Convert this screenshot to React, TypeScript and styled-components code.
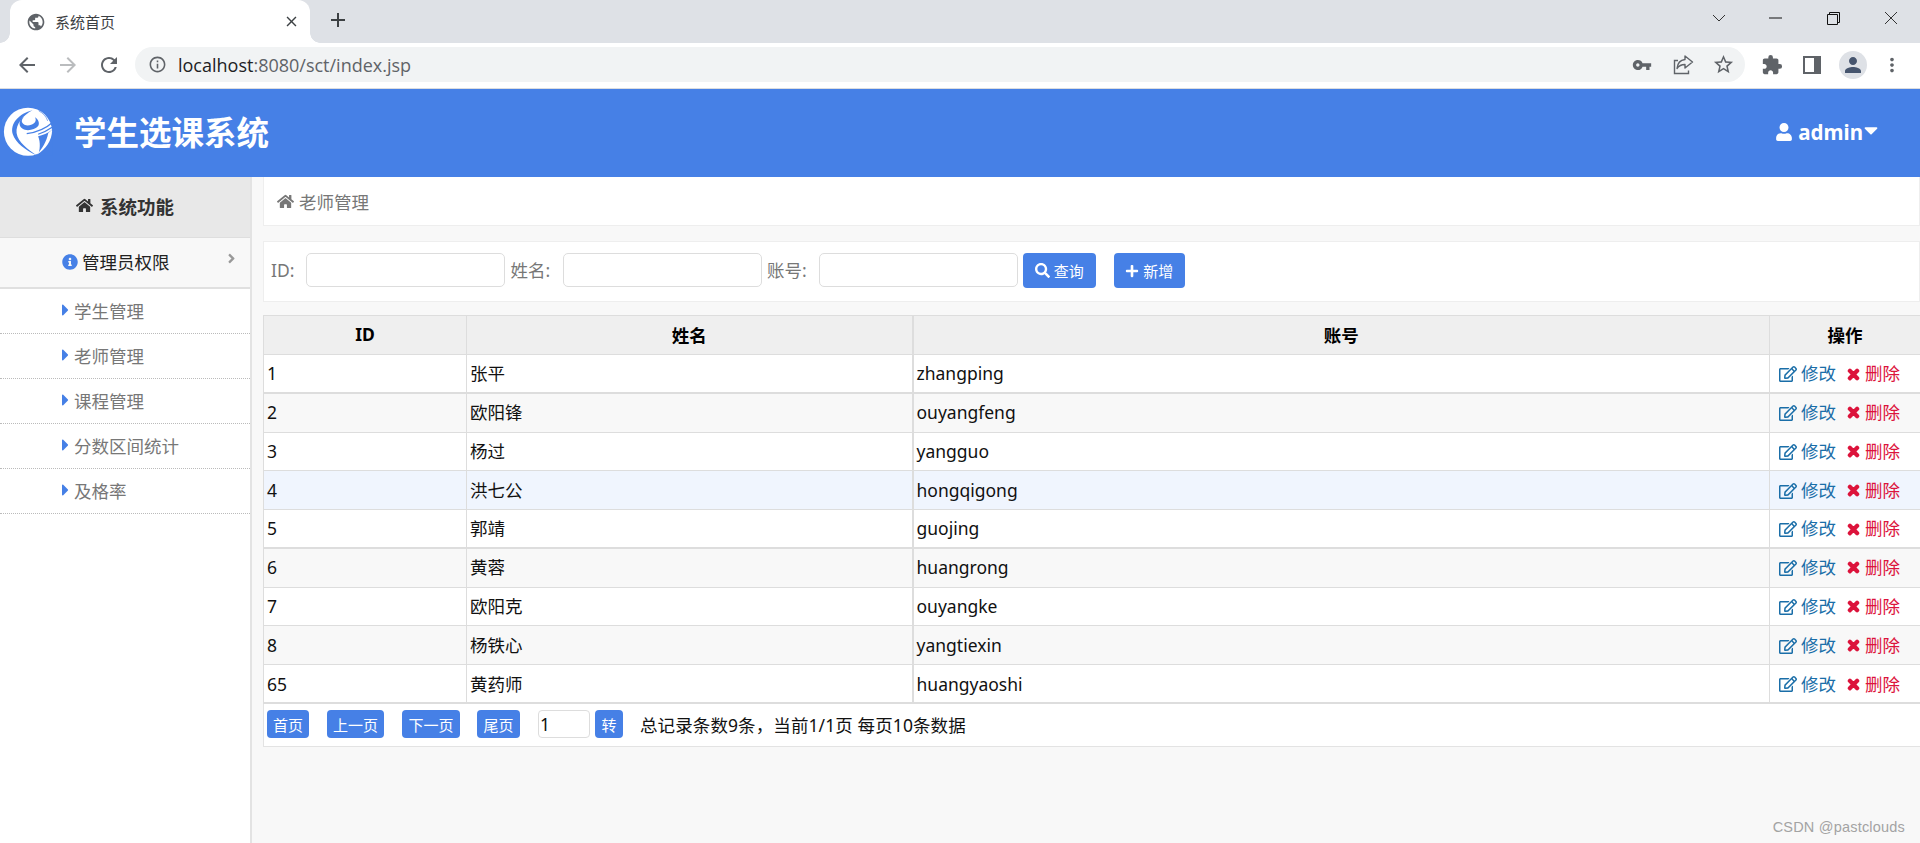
import React from "react";
import styled, { createGlobalStyle } from "styled-components";
import { FaHome, FaInfoCircle, FaCaretRight, FaCaretDown, FaUser, FaRegEdit, FaTimes, FaSearch, FaPlus, FaAngleRight } from "react-icons/fa";
import { MdPublic, MdVpnKey, MdExtension, MdMoreVert, MdPerson, MdArrowBack, MdArrowForward, MdRefresh, MdInfoOutline, MdStarBorder, MdClose, MdAdd } from "react-icons/md";

const FONT = `"Noto Sans", "Noto Sans CJK SC", sans-serif`;
const BLUE = "#4680e6";

const Global = createGlobalStyle`
  html, body { margin: 0; padding: 0; height: 100%; overflow: hidden; background: #f8f8f8; }
  * { box-sizing: border-box; }
  body { font-family: ${FONT}; font-size: 17.5px; }
`;

const Page = styled.div`
  width: 1920px; height: 843px; display: flex; flex-direction: column; position: relative; overflow: hidden;
`;
const TabStrip = styled.div`
  height: 43px; background: #dee1e6; display: flex; align-items: flex-end; padding-left: 10px; flex: none;
`;
const Tab = styled.div`
  width: 300px; height: 43px; background: #fff; border-radius: 12px 12px 0 0; display: flex; align-items: center;
  padding: 0 10px 0 16px; position: relative; color: #3c4043; font-size: 15px;
  span { margin-left: 9px; flex: 1; }
  &::before, &::after { content: ""; position: absolute; bottom: 0; width: 10px; height: 10px;
    background: radial-gradient(circle at 0 0, #dee1e6 9.5px, #fff 10px); }
  &::before { left: -10px; }
  &::after { right: -10px; transform: scaleX(-1); }
`;
const NewTab = styled.div`
  margin: 0 0 3px 16px; height: 40px; display: flex; align-items: center; color: #3c4043;
`;
const WindowControls = styled.div`
  margin-left: auto; height: 43px; display: flex; align-items: flex-start;
`;
const WinBtn = styled.div<{ $w: number }>`
  width: ${(p) => p.$w}px; height: 36px; display: flex; align-items: center; justify-content: center;
`;
const Toolbar = styled.div`
  height: 46px; flex: none; background: #fff; border-bottom: 1px solid #dadce0; display: flex; align-items: center; padding: 0 0 2px 15px;
`;
const NavBtn = styled.div<{ $dim?: boolean }>`
  width: 24px; height: 24px; margin-right: 17px; display: flex; color: ${(p) => (p.$dim ? "#babcbe" : "#5f6368")};
`;
const Omnibox = styled.div`
  width: 1610px; height: 35px; margin-left: -3px; border-radius: 18px; background: #f1f3f4; display: flex; align-items: center; padding: 0 0 0 13px; color: #5f6368;
`;
const Url = styled.div`
  margin-left: 11px; font-family: "Open Sans", sans-serif; font-size: 18px; color: #5f6368; flex: 1;
  b { font-weight: 400; color: #202124; }
`;
const OmniIcon = styled.div<{ $mr: number }>`
  display: flex; margin-right: ${(p) => p.$mr}px; color: #5f6368;
`;
const ToolIcons = styled.div`
  display: flex; align-items: center; color: #5f6368; margin-left: 14px;
`;
const ToolIcon = styled.div<{ $w: number }>`
  width: ${(p) => p.$w}px; display: flex; justify-content: center; align-items: center;
`;
const Avatar = styled.div`
  width: 28px; height: 28px; border-radius: 50%; background: #dee1e6; display: flex; align-items: center; justify-content: center; color: #46556e;
`;
const Header = styled.header`
  height: 88px; flex: none; background: ${BLUE}; display: flex; align-items: center; color: #fff;
`;
const Title = styled.h1`
  margin: 0 0 0 20px; font-size: 32.5px; font-weight: 700; line-height: 1;
`;
const UserMenu = styled.div`
  margin-left: auto; margin-right: 42px; margin-top: -2px; display: flex; align-items: center; font-size: 20.5px; font-weight: 700;
  svg:first-child { margin-right: 5px; }
  svg:last-child { width: 14px; height: 22px; margin: -4px 0 0 1px; }
`;
const Body = styled.div`
  flex: 1; display: flex; min-height: 0;
`;
const Side = styled.aside`
  width: 252px; flex: none; background: #fff; border-right: 2px solid #e3e3e3;
`;
const SideHead = styled.div`
  height: 61px; background: #e8e8e8; border-bottom: 1px solid #dedede; display: flex; align-items: center; justify-content: center; gap: 7px;
  font-size: 18.5px; font-weight: 700; color: #333; padding-bottom: 3px;
`;
const SideGroup = styled.div`
  height: 51px; background: #f8f8f8; border-bottom: 2px solid #e0e0e0; display: flex; align-items: center; padding: 0 11px 2px 62px; color: #222;
  svg:first-child { color: ${BLUE}; margin-right: 4px; }
  svg:last-child { margin-left: auto; margin-top: -6px; color: #999; }
`;
const SideItem = styled.div`
  height: 45px; border-bottom: 1px dotted #bbb; display: flex; align-items: center; padding: 0 0 2px 62px; color: #777;
  svg { color: ${BLUE}; width: 7px; height: 20px; margin-right: 5px; }
`;
const Main = styled.main`
  flex: 1; padding-left: 11px; min-width: 0; background: #f8f8f8;
`;
const Crumb = styled.div`
  height: 49px; background: #fff; border: 1px solid #eee; border-top: 0; display: flex; align-items: center; padding: 0 0 0 13px; color: #777; gap: 5px;
`;
const SearchBar = styled.div`
  height: 61px; margin-top: 15px; background: #fff; border: 1px solid #eee; display: flex; align-items: center; padding: 0 0 4px 7px; color: #777;
`;
const FieldLabel = styled.label<{ $mr: number }>`
  white-space: nowrap; margin-right: ${(p) => p.$mr}px;
`;
const TextInput = styled.input`
  width: 199px; height: 34px; border: 1px solid #ddd; border-radius: 5px; background: #fff; margin-right: 5px; padding: 0;
`;
const ActionButton = styled.button<{ $ml: number; $w: number }>`
  width: ${(p) => p.$w}px; height: 35px; margin-left: ${(p) => p.$ml}px; border: 0; border-radius: 4px; background: ${BLUE}; color: #fff; padding: 0;
  display: flex; align-items: center; justify-content: center; gap: 4px; font: 15px ${FONT}; margin-top: 2px;
`;
const Grid = styled.table`
  margin-top: 13px; border-collapse: collapse; table-layout: fixed; width: 1657px; background: #fff; color: #111;
  th:nth-child(3), td:nth-child(3) { border-left-width: 2px; }
`;
const Th = styled.th<{ $w: number }>`
  width: ${(p) => p.$w}px; height: 39px; background: #efefef; border: 1px solid #ddd; font-size: 17.5px; font-weight: 700; color: #000; padding: 0 0 2px;
`;
const Tr = styled.tr<{ $tone?: "grey" | "blue"; $thick?: boolean; $lift?: boolean }>`
  height: 38.78px; background: ${(p) => (p.$tone === "grey" ? "#f8f8f8" : p.$tone === "blue" ? "#f0f5fe" : "#fff")};
  td { border-bottom-width: ${(p) => (p.$thick ? 2 : 1)}px; padding-top: ${(p) => (p.$lift ? 0 : 1)}px; }
`;
const Td = styled.td`
  border: 1px solid #ddd; padding: 1px 0 0 3px; white-space: nowrap; line-height: 1;
`;
const Ops = styled.div`
  display: flex; align-items: center; padding-left: 6px;
`;
const OpLink = styled.a<{ $c: string; $ml?: number }>`
  color: ${(p) => p.$c}; display: inline-flex; align-items: center; gap: 4px; margin-left: ${(p) => p.$ml || 0}px;
`;
const HeavyTimes = styled(FaTimes)`
  stroke: currentColor; stroke-width: 50px;
`;
const Pager = styled.div`
  height: 43px; background: #fff; border-left: 1px solid #e3e3e3; border-bottom: 1px solid #e3e3e3; display: flex; align-items: center; padding: 0 0 2px 3px; color: #111;
`;
const PageBtn = styled.button<{ $w: number; $ml: number }>`
  width: ${(p) => p.$w}px; height: 28px; margin-left: ${(p) => p.$ml}px; border: 0; border-radius: 4px; background: ${BLUE}; color: #fff; padding: 0; font: 15px ${FONT};
`;
const PageInput = styled.input`
  width: 52px; height: 28px; margin-left: 18px; border: 1px solid #ddd; border-radius: 4px; padding: 0 0 0 1px; font: 17.5px ${FONT}; color: #111; background: #fff;
`;
const PagerText = styled.span`
  margin-left: 17px; white-space: nowrap; letter-spacing: 0.1px;
`;
const Watermark = styled.div`
  position: absolute; right: 15px; bottom: 8px; font: 14.5px "Liberation Sans", sans-serif; color: #a3a3a3; letter-spacing: 0.2px;
`;

const rows: [string, string, string, ("grey" | "blue")?, boolean?][] = [
  ["1", "张平", "zhangping", undefined, true],
  ["2", "欧阳锋", "ouyangfeng", "grey"],
  ["3", "杨过", "yangguo"],
  ["4", "洪七公", "hongqigong", "blue"],
  ["5", "郭靖", "guojing", undefined, true],
  ["6", "黄蓉", "huangrong", "grey"],
  ["7", "欧阳克", "ouyangke"],
  ["8", "杨铁心", "yangtiexin", "grey"],
  ["65", "黄药师", "huangyaoshi", undefined, true],
];

const Logo = () => (
  <svg width="52" height="54" viewBox="8 20 164 164" style={{ marginLeft: 2 }} fill="none">
    <circle cx="90" cy="98" r="76" fill="#fff" />
    <path d="M122 112c14-2 30-8 44-20v80h-44c6-18 8-40 0-60z" fill={BLUE} />
    <path d="M166 92c0 34-20 62-48 78 18-20 30-40 36-68z" fill="#fff" />
    <path d="M104 30C62 40 32 72 42 106c8 26 40 50 74 66-24-18-58-40-62-70-3-28 20-56 50-72z" fill={BLUE} />
    <path d="M78 50C62 58 58 78 72 88c14 10 40 4 50-8 6-10 0-22-10-28 6 10 0 20-12 24-10 4-24 2-28-6-4-6 0-14 6-20z" fill={BLUE} />
    <path d="M168 68c-22 20-52 32-82 36" stroke={BLUE} strokeWidth="4" />
    <path d="M166 84c-14 10-26 16-44 22" stroke={BLUE} strokeWidth="4" />
    <path d="M152 64c-4-14-14-24-28-32" stroke={BLUE} strokeWidth="2" />
  </svg>
);

const Share = () => (
  <svg width="22" height="22" viewBox="0 0 22 22" fill="none" stroke="#5f6368" strokeWidth="1.4">
    <path d="M6 6.5H2.5v13h14v-3" />
    <path d="M13 2l7.5 6-7.5 6v-3.5c-3.5 0-6 1-8 4 .5-5 3.5-8.5 8-9z" strokeLinejoin="round" />
  </svg>
);

const PanelIcon = () => (
  <svg width="18" height="18" viewBox="0 0 18 18">
    <path fill="#5f6368" fillRule="evenodd" d="M0 0h18v18H0zM2 2v14h9V2z" />
  </svg>
);

export default function App() {
  return (
    <Page>
      <Global />
      <TabStrip>
        <Tab>
          <MdPublic size={20} color="#5f6368" />
          <span>系统首页</span>
          <MdClose size={17} color="#3c4043" />
        </Tab>
        <NewTab><MdAdd size={24} /></NewTab>
        <WindowControls>
          <WinBtn $w={57}>
            <svg width="14" height="8" viewBox="0 0 14 8" fill="none" stroke="#333"><path d="M1 1l6 6 6-6" /></svg>
          </WinBtn>
          <WinBtn $w={57}>
            <svg width="13" height="2" viewBox="0 0 13 2"><path d="M0 1h13" stroke="#111" /></svg>
          </WinBtn>
          <WinBtn $w={58}>
            <svg width="13" height="13" viewBox="0 0 13 13" fill="none" stroke="#111"><path d="M.5 2.5h10v10H.5zM2.5 2.5V.5h10v10h-2" /></svg>
          </WinBtn>
          <WinBtn $w={58}>
            <svg width="14" height="14" viewBox="0 0 14 14" fill="none" stroke="#333"><path d="M1 1l12 12M13 1L1 13" /></svg>
          </WinBtn>
        </WindowControls>
      </TabStrip>
      <Toolbar>
        <NavBtn><MdArrowBack size={24} /></NavBtn>
        <NavBtn $dim><MdArrowForward size={24} /></NavBtn>
        <NavBtn><MdRefresh size={24} /></NavBtn>
        <Omnibox>
          <MdInfoOutline size={19} />
          <Url><b>localhost</b>:8080/sct/index.jsp</Url>
          <OmniIcon $mr={20}><MdVpnKey size={20} /></OmniIcon>
          <OmniIcon $mr={18}><Share /></OmniIcon>
          <OmniIcon $mr={10}><MdStarBorder size={23} /></OmniIcon>
        </Omnibox>
        <ToolIcons>
          <ToolIcon $w={26}><MdExtension size={22} /></ToolIcon>
          <ToolIcon $w={54}><PanelIcon /></ToolIcon>
          <ToolIcon $w={28}><Avatar><MdPerson size={24} /></Avatar></ToolIcon>
          <ToolIcon $w={50}><MdMoreVert size={22} /></ToolIcon>
        </ToolIcons>
      </Toolbar>
      <Header>
        <Logo />
        <Title>学生选课系统</Title>
        <UserMenu>
          <FaUser size={18} />
          admin
          <FaCaretDown />
        </UserMenu>
      </Header>
      <Body>
        <Side>
          <SideHead><FaHome size={17} />系统功能</SideHead>
          <SideGroup><FaInfoCircle size={16} />管理员权限<FaAngleRight size={15} /></SideGroup>
          {["学生管理", "老师管理", "课程管理", "分数区间统计", "及格率"].map((t) => (
            <SideItem key={t}><FaCaretRight />{t}</SideItem>
          ))}
        </Side>
        <Main>
          <Crumb><FaHome size={17} />老师管理</Crumb>
          <SearchBar>
            <FieldLabel $mr={12}>ID:</FieldLabel>
            <TextInput />
            <FieldLabel $mr={13}>姓名:</FieldLabel>
            <TextInput />
            <FieldLabel $mr={12}>账号:</FieldLabel>
            <TextInput />
            <ActionButton $ml={0} $w={73}><FaSearch size={15} />查询</ActionButton>
            <ActionButton $ml={18} $w={71}><FaPlus size={14} />新增</ActionButton>
          </SearchBar>
          <Grid>
            <thead>
              <tr>
                <Th $w={203}>ID</Th>
                <Th $w={446}>姓名</Th>
                <Th $w={857}>账号</Th>
                <Th $w={151}>操作</Th>
              </tr>
            </thead>
            <tbody>
              {rows.map(([id, name, acc, tone, thick], i) => (
                <Tr key={id} $tone={tone} $thick={thick} $lift={i === 1 || i === 5}>
                  <Td>{id}</Td>
                  <Td>{name}</Td>
                  <Td>{acc}</Td>
                  <Td>
                    <Ops>
                      <OpLink $c="#1a6ea8"><FaRegEdit size={18} />修改</OpLink>
                      <OpLink $c="#dc143c" $ml={10}><HeavyTimes size={15} />删除</OpLink>
                    </Ops>
                  </Td>
                </Tr>
              ))}
            </tbody>
          </Grid>
          <Pager>
            <PageBtn $w={42} $ml={0}>首页</PageBtn>
            <PageBtn $w={57} $ml={18}>上一页</PageBtn>
            <PageBtn $w={58} $ml={18}>下一页</PageBtn>
            <PageBtn $w={43} $ml={17}>尾页</PageBtn>
            <PageInput defaultValue="1" />
            <PageBtn $w={28} $ml={5}>转</PageBtn>
            <PagerText>总记录条数9条，当前1/1页 每页10条数据</PagerText>
          </Pager>
        </Main>
      </Body>
      <Watermark>CSDN @pastclouds</Watermark>
    </Page>
  );
}
